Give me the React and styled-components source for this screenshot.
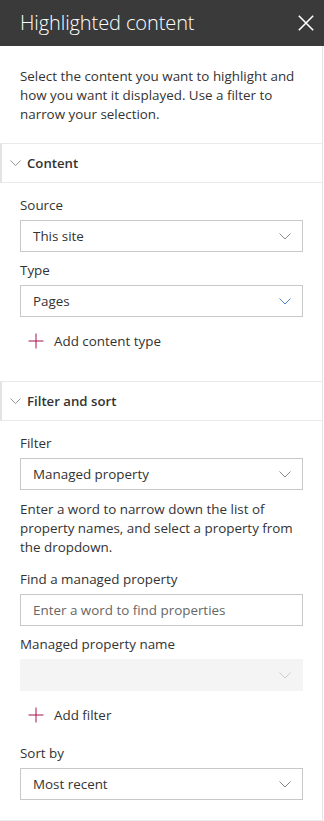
import React from "react";
import styled, { createGlobalStyle } from "styled-components";

const Global = createGlobalStyle`
  html, body { margin: 0; padding: 0; background: #ffffff; }
  body { font-family: "Open Sans", "Noto Sans", sans-serif; color: #333333; }
  * { box-sizing: border-box; }
`;

const Panel = styled.div`
  width: 324px;
  display: flex;
  flex-direction: column;
`;

const Header = styled.header`
  height: 46px;
  background: #3a3a3a;
  display: flex;
  align-items: center;
  justify-content: space-between;
  padding: 0 6px 0 20px;
`;

const Title = styled.h1`
  margin: 0;
  font-weight: 300;
  font-size: 20px;
  color: #ffffff;
  line-height: 28px;
  letter-spacing: -0.1px;
`;

const CloseButton = styled.button`
  width: 24px;
  height: 24px;
  border: 0;
  background: transparent;
  padding: 0;
  display: flex;
  align-items: center;
  justify-content: center;
`;

const Body = styled.div`
  border-right: 1px solid #e6e6e6;
  border-bottom: 1px solid #eaeaea;
  width: 323px;
`;

const Intro = styled.p`
  margin: 0;
  padding: 21px 19px 19px 20px;
  font-size: 13.4px;
  line-height: 19px;
`;

const SectionHeader = styled.div`
  height: 40px;
  border-top: 1px solid #eaeaea;
  border-bottom: 1px solid #eaeaea;
  border-left: 2px solid #e3e3e3;
  display: flex;
  align-items: center;
  padding-left: 8px;
  gap: 6px;
  font-weight: 600;
  font-size: 13.2px;
`;

const SectionBody = styled.div`
  padding: 7px 19px 20px 20px;
  display: flex;
  flex-direction: column;
`;

const Field = styled.div`
  display: flex;
  flex-direction: column;
  margin-top: 3px;
  &:first-child { margin-top: 0; }
`;

const Label = styled.label`
  font-size: 13.4px;
  line-height: 20px;
  padding: 5px 0;
`;

const Dropdown = styled.div`
  height: 32px;
  border: 1px solid ${(p) => (p.$disabled ? "#f4f4f4" : "#c8c8c8")};
  background: ${(p) => (p.$disabled ? "#f4f4f4" : "#ffffff")};
  display: flex;
  align-items: center;
  justify-content: space-between;
  padding: 0 11px 0 12px;
  font-size: 13.4px;
`;

const InputBox = styled.div`
  height: 32px;
  border: 1px solid #c8c8c8;
  display: flex;
  align-items: center;
  padding: 0 12px;
  font-size: 13.4px;
  color: #666666;
`;

const HelpText = styled.p`
  margin: 10px 0 4px 0;
  font-size: 13.4px;
  line-height: 19px;
`;

const ActionRow = styled.div`
  height: 40px;
  margin-top: 4px;
  display: flex;
  align-items: center;
  padding-left: 8px;
  gap: 10px;
  font-size: 13.4px;
`;

const Chevron = ({ color = "#888888", size = 12 }) => (
  <svg width={size} height={size / 2 + 1} viewBox="0 0 12 7" fill="none">
    <path d="M0.5 0.5 L6 6 L11.5 0.5" stroke={color} strokeWidth="1" />
  </svg>
);

const Plus = () => (
  <svg width="16" height="16" viewBox="0 0 16 16" fill="none">
    <path d="M8 0.5 V15.5 M0.5 8 H15.5" stroke="#a80f4f" strokeWidth="1" />
  </svg>
);

const Close = () => (
  <svg width="16" height="16" viewBox="0 0 16 16" fill="none">
    <path d="M0.8 0.8 L15.2 15.2 M15.2 0.8 L0.8 15.2" stroke="#ffffff" strokeWidth="1.6" />
  </svg>
);

const Select = ({ value, disabled, chevron }) => (
  <Dropdown $disabled={disabled}>
    <span>{value}</span>
    <Chevron color={chevron || (disabled ? "#cccccc" : "#8a8a8a")} />
  </Dropdown>
);

export default function App() {
  return (
    <>
      <Global />
      <Panel>
        <Header>
          <Title>Highlighted content</Title>
          <CloseButton aria-label="Close">
            <Close />
          </CloseButton>
        </Header>
        <Body>
          <Intro>
            Select the content you want to highlight and how you want it displayed. Use a filter to narrow your selection.
          </Intro>

          <SectionHeader>
            <Chevron color="#8a8a8a" size={11} />
            <span>Content</span>
          </SectionHeader>
          <SectionBody>
            <Field>
              <Label>Source</Label>
              <Select value="This site" />
            </Field>
            <Field>
              <Label>Type</Label>
              <Select value="Pages" chevron="#4a82c4" />
            </Field>
            <ActionRow>
              <Plus />
              <span>Add content type</span>
            </ActionRow>
          </SectionBody>

          <SectionHeader>
            <Chevron color="#8a8a8a" size={11} />
            <span>Filter and sort</span>
          </SectionHeader>
          <SectionBody>
            <Field>
              <Label>Filter</Label>
              <Select value="Managed property" />
            </Field>
            <HelpText>
              Enter a word to narrow down the list of property names, and select a property from the dropdown.
            </HelpText>
            <Field>
              <Label>Find a managed property</Label>
              <InputBox>Enter a word to find properties</InputBox>
            </Field>
            <Field>
              <Label>Managed property name</Label>
              <Select value="" disabled />
            </Field>
            <ActionRow>
              <Plus />
              <span>Add filter</span>
            </ActionRow>
            <Field>
              <Label>Sort by</Label>
              <Select value="Most recent" />
            </Field>
          </SectionBody>
        </Body>
      </Panel>
    </>
  );
}
